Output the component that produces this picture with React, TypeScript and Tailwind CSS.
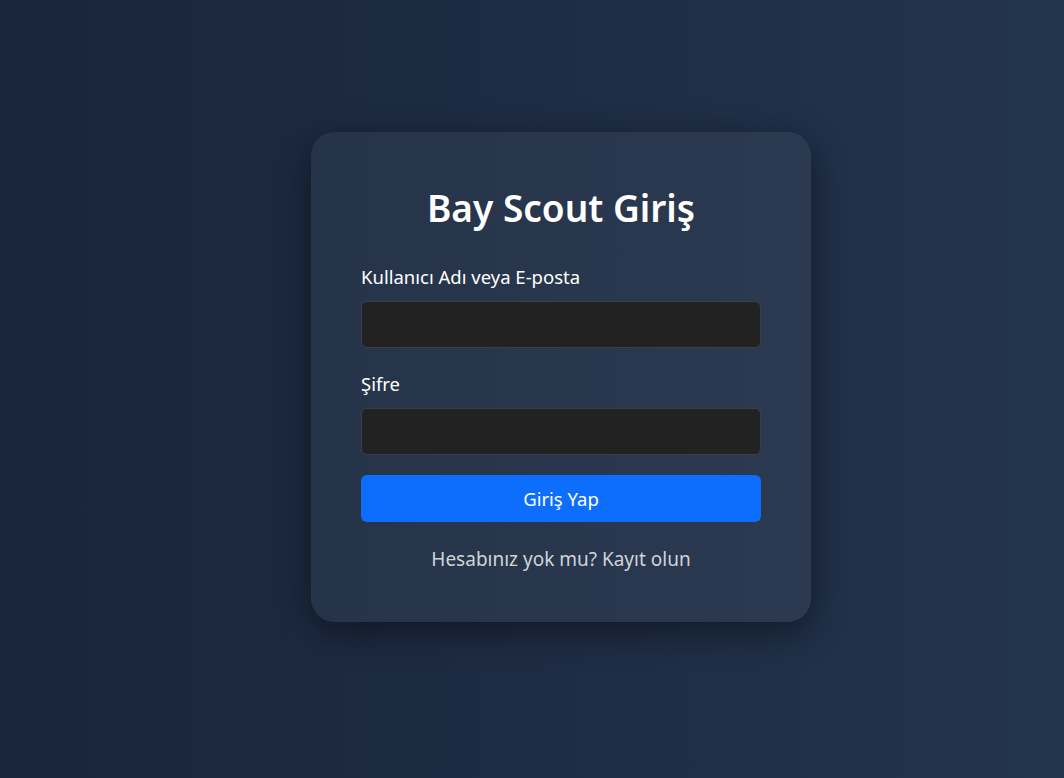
export default function App() {
  return (
    <div
      className="flex min-h-screen w-full items-center justify-center bg-linear-to-r from-[#19253a] to-[#23344d] pb-[24px] pl-[58px] text-white"
      style={{ fontFamily: '"Noto Sans", "Open Sans", sans-serif' }}
    >
      {/* Login card */}
      <div className="w-[500px] rounded-[24px] bg-linear-to-r from-[#263449] to-[#2b3a51] px-[50px] pt-[52px] pb-[49px] shadow-[0_10px_36px_rgba(0,0,0,0.45)]">
        <h1 className="text-center text-[37px] font-semibold leading-[48px]">Bay Scout Giriş</h1>

        <form className="mt-[32px]" onSubmit={(e) => e.preventDefault()}>
          <label className="block text-[18.5px] leading-[26px]">Kullanıcı Adı veya E-posta</label>
          <input
            type="text"
            className="mt-[11px] block h-[47px] w-full rounded-[6px] border border-[#3c3f45] bg-[#222222] px-3 text-white outline-none"
          />

          <label className="mt-[23px] block text-[18.5px] leading-[26px]">Şifre</label>
          <input
            type="password"
            className="mt-[11px] block h-[47px] w-full rounded-[6px] border border-[#3c3f45] bg-[#222222] px-3 text-white outline-none"
          />

          <button
            type="submit"
            className="mt-[20px] block h-[47px] w-full rounded-[6px] bg-[#0d6efd] text-[18.5px] text-white"
          >
            Giriş Yap
          </button>
        </form>

        <p className="mt-[23px] text-center text-[19px] leading-[28px] text-[#d0d4da]">Hesabınız yok mu? Kayıt olun</p>
      </div>
    </div>
  )
}
